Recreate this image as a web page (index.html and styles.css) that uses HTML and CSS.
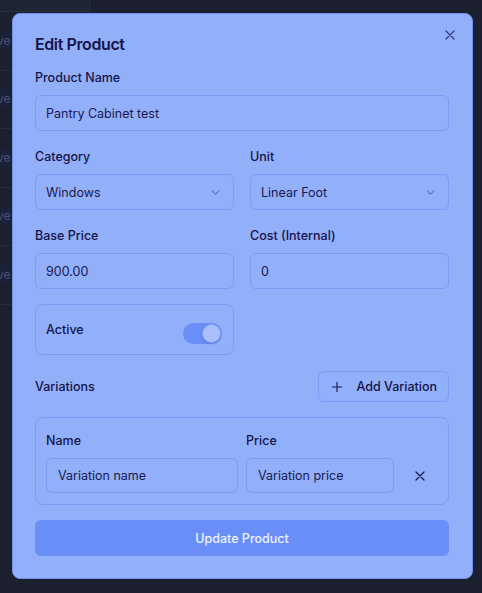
FILE: index.html
```html
<!DOCTYPE html>
<html lang="en">
<head>
<meta charset="utf-8">
<title>Edit Product</title>
<link rel="stylesheet" href="styles.css">
</head>
<body>
<div class="page">
  <div class="bg-table">
    <div class="bg-head"></div>
    <div class="bg-row"><span class="pill">Active</span></div>
    <div class="bg-row"><span class="pill">Active</span></div>
    <div class="bg-row"><span class="pill">Active</span></div>
    <div class="bg-row"><span class="pill">Active</span></div>
    <div class="bg-row"><span class="pill">Active</span></div>
  </div>

  <div class="modal">
    <button class="close" aria-label="Close">
      <svg width="10" height="10" viewBox="0 0 10 10"><path d="M1 1L9 9M9 1L1 9" stroke="#34347a" stroke-width="1.2" stroke-linecap="round"/></svg>
    </button>
    <h2 class="title">Edit Product</h2>

    <div class="field">
      <label class="label">Product Name</label>
      <div class="input">Pantry Cabinet test</div>
    </div>

    <div class="grid2">
      <div class="field">
        <label class="label">Category</label>
        <div class="input select">Windows
          <svg class="chev" width="10" height="6" viewBox="0 0 10 6"><path d="M1 1L5 5L9 1" fill="none" stroke="#3c4488" stroke-width="1" stroke-linecap="round" stroke-linejoin="round"/></svg>
        </div>
      </div>
      <div class="field">
        <label class="label">Unit</label>
        <div class="input select">Linear Foot
          <svg class="chev" width="10" height="6" viewBox="0 0 10 6"><path d="M1 1L5 5L9 1" fill="none" stroke="#3c4488" stroke-width="1" stroke-linecap="round" stroke-linejoin="round"/></svg>
        </div>
      </div>
    </div>

    <div class="grid2 last-row">
      <div class="field">
        <label class="label">Base Price</label>
        <div class="input">900.00</div>
      </div>
      <div class="field">
        <label class="label">Cost (Internal)</label>
        <div class="input">0</div>
      </div>
    </div>

    <div class="grid2">
      <div class="active-box">
        <span class="label-inline">Active</span>
        <span class="toggle"><span class="knob"></span></span>
      </div>
    </div>

    <div class="var-head">
      <span class="label-inline">Variations</span>
      <button class="add-btn">
        <svg width="10" height="10" viewBox="0 0 10 10"><path d="M5 0.5V9.5M0.5 5H9.5" stroke="#1c1b52" stroke-width="1.2" stroke-linecap="round"/></svg>
        <span>Add Variation</span>
      </button>
    </div>

    <div class="var-box">
      <div class="var-grid">
        <span class="label-inline">Name</span>
        <span class="label-inline">Price</span>
        <span></span>
        <div class="input small">Variation name</div>
        <div class="input small">Variation price</div>
        <span class="remove">
          <svg width="10" height="10" viewBox="0 0 10 10"><path d="M1 1L9 9M9 1L1 9" stroke="#1c1b52" stroke-width="1.3" stroke-linecap="round"/></svg>
        </span>
      </div>
    </div>

    <button class="submit">Update Product</button>
  </div>
</div>
</body>
</html>
```

FILE: styles.css
```css
* { box-sizing: border-box; }
html, body { margin: 0; padding: 0; }
body {
  background: #1c202e;
  font-family: Inter, "Noto Sans", sans-serif;
  color: #15144a;
  width: 482px;
  height: 593px;
  overflow: hidden;
}
.page { position: relative; width: 482px; height: 593px; }

.bg-table { width: 90px; overflow: hidden; }
.bg-head { height: 12px; background: #1f2434; border-right: 1px solid #2a3042; border-bottom: 1px solid #2a2f3f; }
.bg-row {
  height: 58.5px;
  border-bottom: 1px solid #262b3a;
  display: flex;
  align-items: center;
}
.pill {
  margin-left: -29px;
  background: #1a2238;
  color: #46527a;
  font-size: 12px;
  line-height: 18px;
  padding: 0 4px;
  border-radius: 3px;
}

.modal {
  position: absolute;
  left: 12px;
  top: 13px;
  width: 461px;
  background: #92aff9;
  border: 1px solid #6f90f2;
  border-radius: 8px;
  padding: 18px 23px 22px 22px;
  display: flex;
  flex-direction: column;
}
.close {
  position: absolute;
  right: 17px;
  top: 16px;
  background: none;
  border: 0;
  padding: 0;
  width: 10px;
  height: 10px;
  display: flex;
}
.title {
  margin: 0 0 12px;
  font-size: 16px;
  line-height: 24px;
  font-weight: 600;
  letter-spacing: -0.4px;
  color: #15144a;
}
.field { display: flex; flex-direction: column; margin-bottom: 16px; }
.last-row .field { margin-bottom: 15px; }
.label, .label-inline {
  font-size: 12.5px;
  line-height: 19px;
  font-weight: 500;
  color: #15144a;
}
.label { margin-bottom: 8px; }
.input {
  height: 36px;
  border: 1px solid #7b9bf6;
  border-radius: 6px;
  padding: 0 10px;
  display: flex;
  align-items: center;
  font-size: 12.5px;
  color: #1a1950;
}
.select { justify-content: space-between; padding-right: 13px; }
.chev { width: 9px; height: 5px; }
.grid2 {
  display: grid;
  grid-template-columns: 1fr 1fr;
  column-gap: 16px;
}
.active-box {
  height: 51px;
  border: 1px solid #7b9bf6;
  border-radius: 8px;
  padding: 0 11px 0 10px;
  display: flex;
  align-items: center;
  justify-content: space-between;
  margin-bottom: 16px;
}
.toggle {
  width: 39px;
  height: 21px;
  border-radius: 11px;
  background: #6a8ef8;
  display: flex;
  align-items: center;
  justify-content: flex-end;
  padding: 0 1px;
  margin-top: 7px;
}
.knob {
  width: 19px;
  height: 19px;
  border-radius: 50%;
  background: #a9c0fc;
  border: 1px solid #8aa6f8;
  box-shadow: 0 1px 2px rgba(40, 60, 140, 0.25);
}
.var-head {
  display: flex;
  justify-content: space-between;
  align-items: center;
  margin-bottom: 15px;
}
.add-btn {
  height: 31px;
  border: 1px solid #7b9bf6;
  border-radius: 6px;
  background: none;
  display: flex;
  align-items: center;
  gap: 14px;
  padding: 0 11px 0 13px;
  white-space: nowrap;
  font-family: inherit;
  font-size: 12.5px;
  font-weight: 500;
  color: #15144a;
}
.var-box {
  border: 1px solid #7b9bf6;
  border-radius: 8px;
  padding: 13px 11px 11px 10px;
  margin-bottom: 15px;
}
.var-grid {
  display: grid;
  grid-template-columns: 192px 148px 1fr;
  column-gap: 8px;
  row-gap: 8px;
  align-items: center;
}
.input.small { height: 35px; padding: 0 11px; }
.remove { display: flex; justify-content: center; }
.submit {
  height: 36px;
  border: 0;
  border-radius: 6px;
  background: #6a8ef8;
  color: #eef2ff;
  font-family: inherit;
  font-size: 12.5px;
  font-weight: 500;
}
```
